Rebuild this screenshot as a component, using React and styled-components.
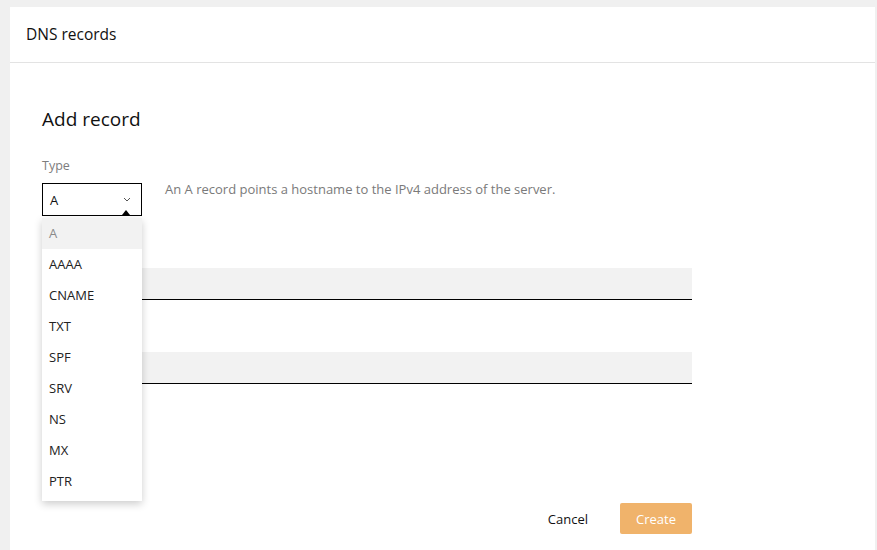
import React from "react";
import styled, { createGlobalStyle } from "styled-components";

const GlobalStyle = createGlobalStyle`
  html, body {
    margin: 0;
    padding: 0;
    background: #f0f0f0;
    font-family: "Open Sans", "Noto Sans", sans-serif;
  }
`;

const Page = styled.div`
  padding: 7px 2px 0 10px;
  height: 550px;
  box-sizing: border-box;
  overflow: hidden;
`;

const Panel = styled.div`
  background: #fff;
  height: 100%;
`;

const Header = styled.div`
  height: 56px;
  display: flex;
  align-items: center;
  padding-left: 16px;
  padding-bottom: 1px;
  box-sizing: border-box;
  border-bottom: 1px solid #e3e3e3;
  font-size: 15.5px;
  color: #111;
`;

const Body = styled.div`
  padding: 44px 32px 0 32px;
  width: 650px;
`;

const Title = styled.h2`
  margin: 0 0 26px;
  font-size: 19px;
  font-weight: 400;
  color: #111;
  line-height: 24px;
`;

const Field = styled.div`
  margin-bottom: ${p => p.gap || 18}px;
`;

const Label = styled.div`
  font-size: 12.5px;
  color: #7d7d7d;
  line-height: 18px;
  height: 18px;
  margin-bottom: 8px;
`;

const SelectRow = styled.div`
  display: flex;
  align-items: flex-start;
  gap: 23px;
`;

const SelectWrap = styled.div`
  position: relative;
  width: 100px;
`;

const SelectBox = styled.div`
  box-sizing: border-box;
  height: 33px;
  border: 1px solid #000;
  display: flex;
  align-items: center;
  justify-content: space-between;
  padding: 0 10px 0 7px;
  font-size: 13px;
  color: #111;
`;

const Caret = styled.div`
  position: absolute;
  left: 80px;
  top: 27px;
  width: 0;
  height: 0;
  border-left: 4px solid transparent;
  border-right: 4px solid transparent;
  border-bottom: 5px solid #000;
`;

const Hint = styled.div`
  font-size: 13px;
  line-height: 18px;
  margin-top: -3px;
  color: #7a7a7a;
`;

const Menu = styled.ul`
  position: absolute;
  top: 35px;
  left: 0;
  width: 100px;
  margin: 0;
  padding: 0 0 4px;
  list-style: none;
  background: #fff;
  box-shadow: 0 3px 8px rgba(0, 0, 0, 0.2);
  z-index: 2;
`;

const Item = styled.li`
  height: 31px;
  line-height: 31px;
  padding-left: 7px;
  font-size: 13px;
  color: ${p => (p.selected ? "#8a8a8a" : "#222")};
  background: ${p => (p.selected ? "#f2f2f2" : "#fff")};
`;

const Input = styled.div`
  height: 31px;
  background: #f2f2f2;
  border-bottom: 1px solid #000;
`;

const Actions = styled.div`
  display: flex;
  justify-content: flex-end;
  align-items: center;
  margin-top: 119px;
  gap: 20px;
`;

const CancelButton = styled.button`
  background: transparent;
  border: none;
  font-family: inherit;
  font-size: 13px;
  color: #111;
  padding: 0 12px;
  height: 31px;
`;

const CreateButton = styled.button`
  background: #f0b36b;
  border: none;
  border-radius: 2px;
  font-family: inherit;
  font-size: 13px;
  color: #fff;
  width: 72px;
  height: 31px;
`;

const types = ["A", "AAAA", "CNAME", "TXT", "SPF", "SRV", "NS", "MX", "PTR"];

const Chevron = () => (
  <svg width="8" height="5" viewBox="0 0 8 5" fill="none">
    <path d="M1 1l3 3 3-3" stroke="#555" strokeWidth="1" />
  </svg>
);

export default function App() {
  return (
    <>
      <GlobalStyle />
      <Page>
        <Panel>
          <Header>DNS records</Header>
          <Body>
            <Title>Add record</Title>
            <Field gap={26}>
              <Label>Type</Label>
              <SelectRow>
                <SelectWrap>
                  <SelectBox>
                    A
                    <Chevron />
                  </SelectBox>
                  <Caret />
                  <Menu>
                    {types.map(t => (
                      <Item key={t} selected={t === "A"}>
                        {t}
                      </Item>
                    ))}
                  </Menu>
                </SelectWrap>
                <Hint>An A record points a hostname to the IPv4 address of the server.</Hint>
              </SelectRow>
            </Field>
            <Field gap={26}>
              <Label />
              <Input />
            </Field>
            <Field>
              <Label />
              <Input />
            </Field>
            <Actions>
              <CancelButton>Cancel</CancelButton>
              <CreateButton>Create</CreateButton>
            </Actions>
          </Body>
        </Panel>
      </Page>
    </>
  );
}
